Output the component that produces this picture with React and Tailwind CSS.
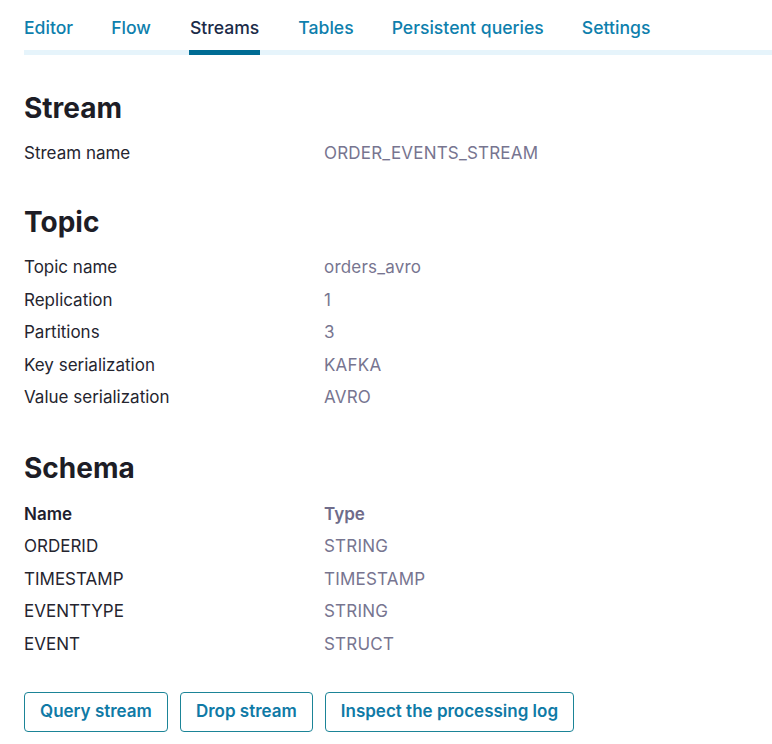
import React from "react";

const tabs = ["Editor", "Flow", "Streams", "Tables", "Persistent queries", "Settings"];

const topic = [
  ["Topic name", "orders_avro"],
  ["Replication", "1"],
  ["Partitions", "3"],
  ["Key serialization", "KAFKA"],
  ["Value serialization", "AVRO"],
];

const schema = [
  ["ORDERID", "STRING"],
  ["TIMESTAMP", "TIMESTAMP"],
  ["EVENTTYPE", "STRING"],
  ["EVENT", "STRUCT"],
];

function Row({ label, value }) {
  return (
    <div className="flex h-[32.5px] items-center text-[17px]">
      <div className="w-[300px] text-[#25252f]">{label}</div>
      <div className="text-[#777590] tracking-[0.2px]">{value}</div>
    </div>
  );
}

export default function App() {
  return (
    <div className="bg-white min-h-[744px] pl-6" style={{ fontFamily: "Inter, 'Noto Sans', sans-serif" }}>
      <div className="flex border-b-[5px] border-[#e6f4fb] h-[55px]">
        {tabs.map((t) => (
          <div
            key={t}
            className={
              "mr-[38px] pt-[15px] text-[17.6px] font-medium -mb-[5px] border-b-[5px] " +
              (t === "Streams"
                ? "text-[#1b2b48] border-[#006c94] px-[1px]"
                : "text-[#0e7fad] border-transparent")
            }
          >
            {t}
          </div>
        ))}
      </div>

      <h2 className="mt-[35px] text-[28px] font-bold text-[#1d1d26] leading-[36px]">Stream</h2>
      <div className="mt-[11px]">
        <Row label="Stream name" value="ORDER_EVENTS_STREAM" />
      </div>

      <h2 className="mt-[34px] text-[28px] font-bold text-[#1d1d26] leading-[36px]">Topic</h2>
      <div className="mt-[12px]">
        {topic.map(([l, v]) => (
          <Row key={l} label={l} value={v} />
        ))}
      </div>

      <h2 className="mt-[36px] text-[28px] font-bold text-[#1d1d26] leading-[36px]">Schema</h2>
      <div className="mt-[12px]">
        <div className="flex h-[32.5px] items-center text-[17px] font-semibold">
          <div className="w-[300px] text-[#1d1d2e]">Name</div>
          <div className="text-[#6f6c8a]">Type</div>
        </div>
        {schema.map(([l, v]) => (
          <Row key={l} label={l} value={v} />
        ))}
      </div>

      <div className="mt-[31px] flex gap-[12px]">
        {["Query stream", "Drop stream", "Inspect the processing log"].map((b) => (
          <button
            key={b}
            className="h-[40px] px-[15px] rounded-[4px] border border-[#1b8497] text-[#0f7aa6] text-[17px] font-semibold"
          >
            {b}
          </button>
        ))}
      </div>
    </div>
  );
}
